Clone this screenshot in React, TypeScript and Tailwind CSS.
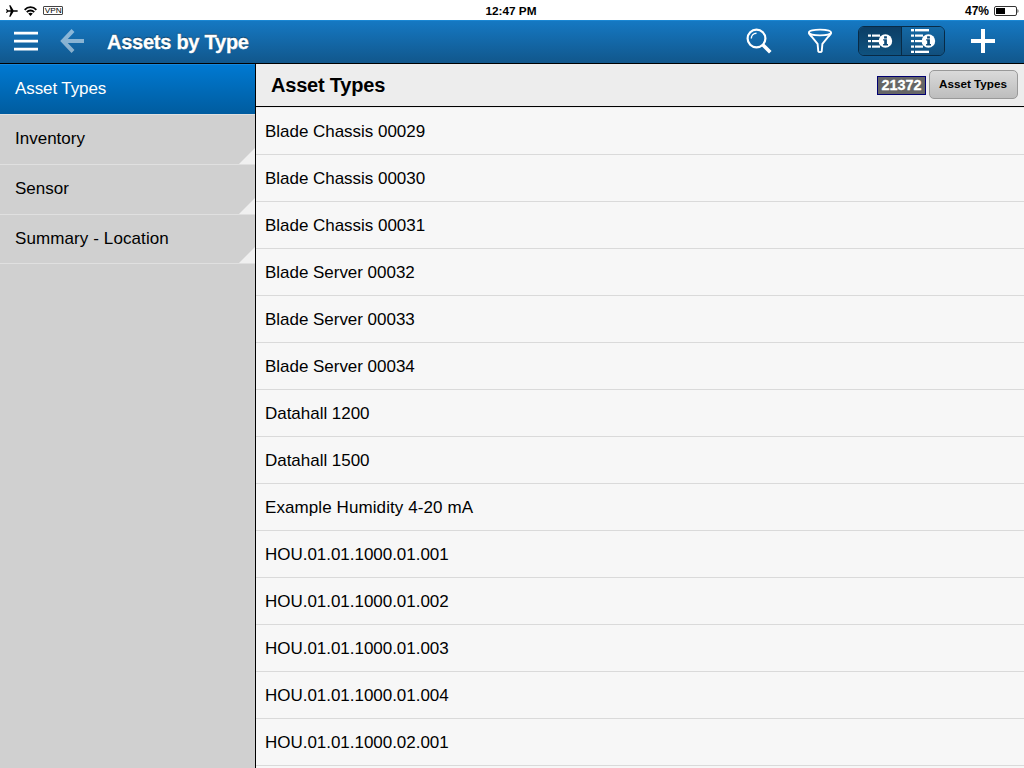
import React from "react";

const assets = [
  "Blade Chassis 00029",
  "Blade Chassis 00030",
  "Blade Chassis 00031",
  "Blade Server 00032",
  "Blade Server 00033",
  "Blade Server 00034",
  "Datahall 1200",
  "Datahall 1500",
  "Example Humidity 4-20 mA",
  "HOU.01.01.1000.01.001",
  "HOU.01.01.1000.01.002",
  "HOU.01.01.1000.01.003",
  "HOU.01.01.1000.01.004",
  "HOU.01.01.1000.02.001",
];

function StatusBar() {
  return (
    <div className="grid h-5 shrink-0 grid-cols-3 items-center bg-white text-[12px] font-bold leading-5 text-black">
      <div className="flex h-5 items-center pl-[6px]">
        <svg width="12" height="12" viewBox="0 0 12 12" className="mr-[6px]">
          <path
            d="M12 6c0-.5-.7-.8-1.500-.8H7.500L4.500.3H3.200l1.500 4.900H2L.9 3.900H.1L.7 6 .1 8.100H.9L2 6.800h2.700L3.200 11.700h1.300l3-4.900h3C11.300 6.800 12 6.500 12 6z"
            fill="#000"
          />
        </svg>
        <svg width="13" height="10" viewBox="0 0 13 10" className="mr-[6px]" fill="none" stroke="#000" strokeWidth="1.9">
          <path d="M.6 3.900C3.900.200 9.100.200 12.400 3.900" />
          <path d="M2.800 6.200C4.900 3.900 8.100 3.900 10.200 6.200" />
          <path d="M4.200 7.600C5.500 6.300 7.500 6.300 8.800 7.600L6.500 10z" fill="#000" stroke="none" />
        </svg>
        <div className="flex h-[9px] w-5 items-center justify-center rounded-[1px] border border-[#444]">
          <span className="scale-x-[1.18] text-[7px] font-normal leading-[7px]">VPN</span>
        </div>
      </div>
      <div className="pr-[2px] pt-px text-center text-[11.800px]">12:47 PM</div>
      <div className="flex items-center justify-end pr-[5px]">
        <span className="mr-[5px] pt-px">47%</span>
        <svg width="25" height="10" viewBox="0 0 25 10">
          <rect x=".5" y=".5" width="22" height="9" rx="1.500" fill="none" stroke="#333" />
          <rect x="2" y="2" width="9" height="6" fill="#000" />
          <path d="M23.500 3v4c1.300-.500 1.300-3.500 0-4z" fill="#333" />
        </svg>
      </div>
    </div>
  );
}

function ListInfoIcon({ tall = false }: { tall?: boolean }) {
  return (
    <svg width="26" height="26" viewBox="0 0 26 26" fill="#fff">
      {tall && (
        <>
          <rect x="1" y="1" width="3" height="2.400" />
          <rect x="5" y="1" width="14" height="2.400" />
          <rect x="1" y="22.700" width="3" height="2.300" />
          <rect x="5" y="22.700" width="14" height="2.300" />
        </>
      )}
      {[6.5, 12, 17.5].map((y) => (
        <g key={y}>
          <rect x="1" y={y} width="3" height="2.200" />
          <rect x="5" y={y} width="8" height="2.200" />
        </g>
      ))}
      <circle cx="18.400" cy="13" r="6.800" />
      <path
        d="M17.100 8.300h2.800v2.100h-2.800zM16.100 11.200h3.800v4.900h1.100v1.400h-4.900v-1.400h1.100v-3.500h-1.100z"
        fill="#0d4a78"
      />
    </svg>
  );
}

function Toolbar() {
  return (
    <header className="flex h-11 shrink-0 items-center border-b border-black bg-linear-to-b from-[#1579c4] to-[#11578c] pb-px text-white shadow-[inset_0_1px_0_#1b87d3]">
      <svg width="26" height="20" viewBox="0 0 26 20" className="ml-[13px] mr-[20px]">
        <path d="M1 .8h24v2.700H1zM1 8.800h24v2.700H1zM1 16.800h24v2.700H1z" fill="#fff" />
      </svg>
      <svg width="26" height="26" viewBox="0 0 26 26" className="mr-[22px] opacity-50" fill="none" stroke="#fff" strokeWidth="4">
        <path d="M14 2.500 4 13l10 10.500M4 13h21" />
      </svg>
      <h1 className="pt-[2px] text-[20px] font-bold tracking-[-0.250px] [-webkit-text-stroke:0.3px_white] [text-shadow:0_-1px_1px_rgba(0,0,0,0.5)]">
        Assets by Type
      </h1>
      <div className="ml-auto flex items-center">
        <svg width="26" height="26" viewBox="0 0 26 26" className="mr-[35px]" fill="none" stroke="#fff">
          <circle cx="10.500" cy="10.500" r="8.900" strokeWidth="2.200" />
          <path d="M5.300 10.500c0-3 2.200-5.200 5.200-5.200" strokeWidth="1.400" />
          <path d="m17 17 7.300 7.300" strokeWidth="3.600" />
        </svg>
        <svg width="26" height="26" viewBox="0 0 26 26" className="mr-[25px]" fill="none" stroke="#fff" strokeWidth="1.900">
          <ellipse cx="13" cy="4.500" rx="11.100" ry="2.900" />
          <path d="M1.900 4.800c.3 1.400 1.300 2.300 2.600 3.700l6.100 7.300.7 7.700c.3.800 3.100.8 3.400 0l.7-7.700 6.100-7.300c1.300-1.400 2.300-2.300 2.600-3.700" />
        </svg>
        <div className="mr-[25px] flex h-[30px] w-[87px] overflow-hidden rounded-[6px] border border-[#082a45]">
          <div className="flex w-[43px] items-center justify-center border-r border-[#082a45] bg-linear-to-b from-[#0c3e65] to-[#0f527f]">
            <ListInfoIcon />
          </div>
          <div className="flex flex-1 items-center justify-center bg-linear-to-b from-[#1469a6] to-[#114f7d]">
            <ListInfoIcon tall />
          </div>
        </div>
        <svg width="26" height="26" viewBox="0 0 26 26" className="mr-[28px]">
          <path d="M11 1h4v10h10v4H15v10h-4V15H1v-4h10z" fill="#fff" />
        </svg>
      </div>
    </header>
  );
}

function SidebarItem({ label, last = false }: { label: string; last?: boolean }) {
  return (
    <div
      className={
        "relative flex items-center border-b border-[#e0e0e0] pl-[15px] pb-px " +
        (last ? "h-[49px] tracking-[0.100px]" : "h-[50px]")
      }
    >
      {label}
      <svg width="16" height="16" className="absolute bottom-0 right-0">
        <path d="M16 0v16H0z" fill="#f0f0f0" />
      </svg>
    </div>
  );
}

export default function App() {
  return (
    <div className="flex h-[768px] w-[1024px] flex-col overflow-hidden font-['Liberation_Sans',Arial,sans-serif] text-[17px] text-black">
      <StatusBar />
      <Toolbar />
      <div className="flex min-h-0 flex-1">
        <nav className="w-64 shrink-0 border-r border-black bg-[#d0d0d0]">
          <div className="flex h-[51px] items-center border-b border-[#e0e0e0] bg-linear-to-b from-[#007ad3] to-[#005c9f] pl-[15px] pb-px tracking-[-0.100px] text-white shadow-[inset_0_1px_0_#1687dc]">
            Asset Types
          </div>
          <SidebarItem label="Inventory" />
          <SidebarItem label="Sensor" />
          <SidebarItem label="Summary - Location" last />
        </nav>
        <main className="min-w-0 flex-1 overflow-hidden bg-[#f7f7f7]">
          <div className="flex h-[43px] items-center border-b border-black bg-[#ededed] pl-[15px] pr-[6px]">
            <h2 className="mr-auto text-[20px] font-bold tracking-[-0.200px]">Asset Types</h2>
            <div className="mr-[3px] flex h-[19px] w-[49px] items-center justify-center border border-[#000072] bg-[#666] pt-px text-[14.400px] font-bold text-white [-webkit-text-stroke:0.3px_white]">
              21372
            </div>
            <button className="mb-[2px] flex h-[29px] w-[89px] items-center justify-center rounded-[5px] border border-[#999] bg-linear-to-b from-[#dadada] to-[#bdbdbd] pr-px text-[11.700px] font-bold">
              Asset Types
            </button>
          </div>
          <div className="border-t border-[#ececec]">
            {assets.map((name) => (
              <div
                key={name}
                className={
                  "flex h-[47px] items-center border-b border-[#dadada] pl-[9px] pt-[2px] " +
                  (name.startsWith("Example") ? "tracking-[0.090px]" : "tracking-[-0.030px]")
                }
              >
                {name}
              </div>
            ))}
          </div>
        </main>
      </div>
    </div>
  );
}
